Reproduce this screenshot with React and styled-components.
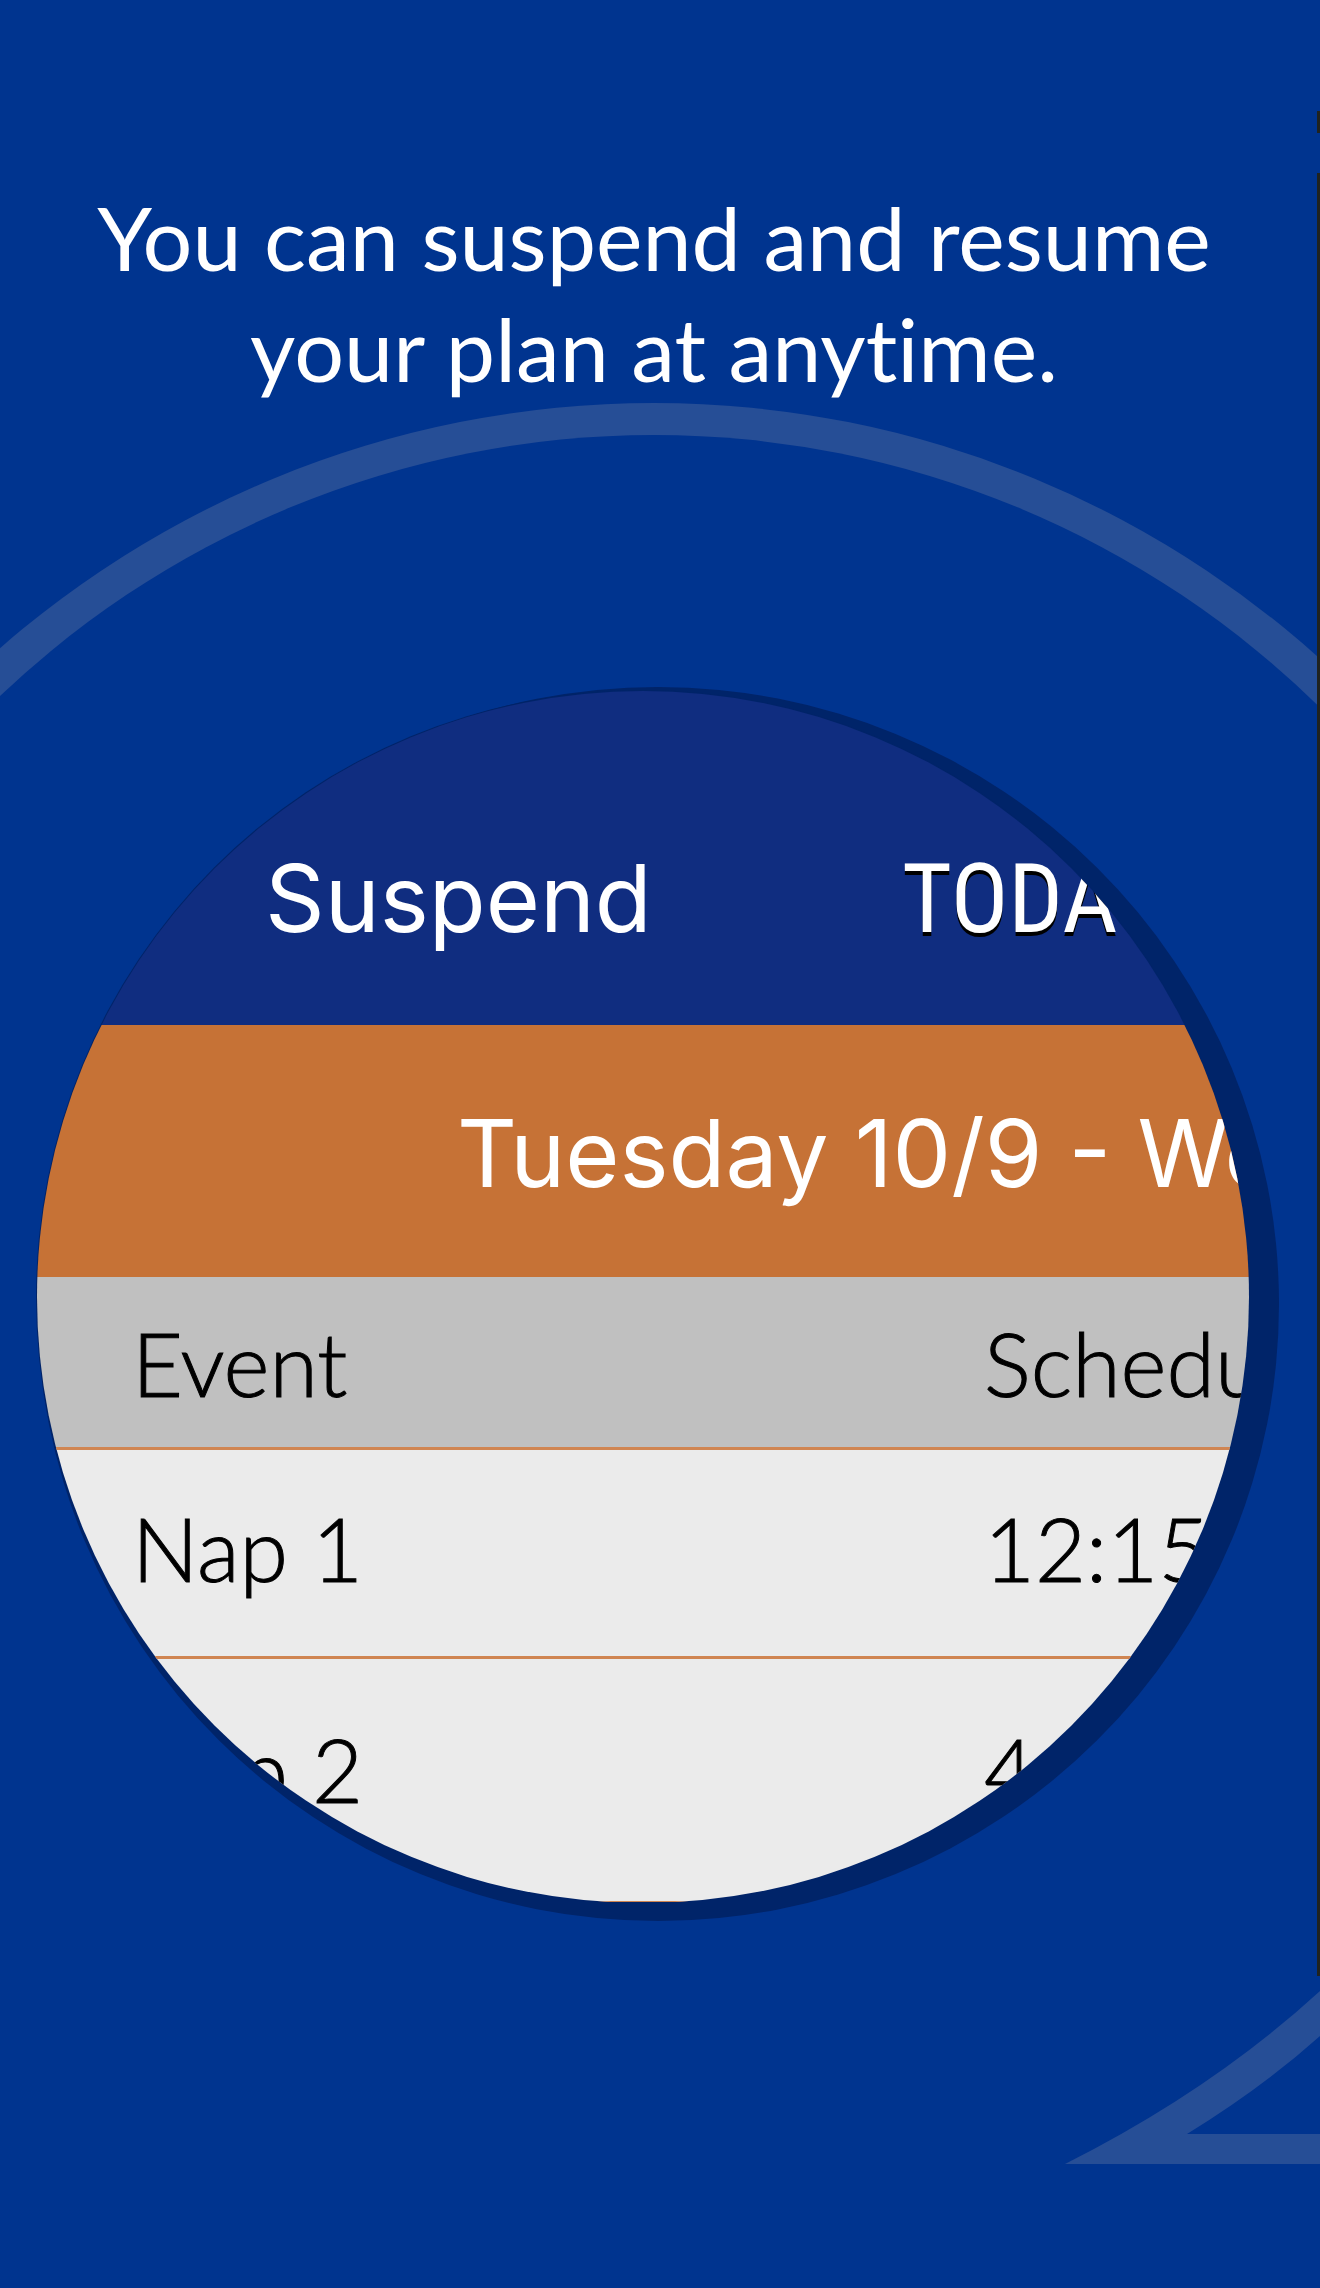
import React from "react";
import styled, { createGlobalStyle } from "styled-components";

const GlobalStyle = createGlobalStyle`
  *, *::before, *::after { box-sizing: border-box; }
  body { margin: 0; background: #00348f; }
`;

const Page = styled.main`
  position: relative;
  min-height: 2288px;
  padding: 182px 12px 0 0;
  overflow: hidden;
  background: #00348f;
  font-family: Lato, "Open Sans", sans-serif;
  font-variant-ligatures: none;
`;

const Backdrop = styled.svg`
  position: absolute;
  inset: 0;
  width: 100%;
  height: 2288px;
`;

const Headline = styled.h1`
  position: relative;
  margin: 0;
  color: #fff;
  font-size: 88px;
  font-weight: 400;
  line-height: 111px;
  text-align: center;
`;

const Stage = styled.section`
  position: relative;
  display: flex;
  justify-content: center;
  margin-top: 284px;
  padding: 3px 22px 0 0;
`;

const Lens = styled.div`
  width: 1212px;
  flex: none;
  height: 1212px;
  overflow: hidden;
  clip-path: circle(50%);
`;

const TopBar = styled.header`
  display: flex;
  align-items: baseline;
  height: 334px;
  padding: 149px 0 0 228px;
  background: #102d80;
`;

const SuspendButton = styled.button`
  width: 637px;
  padding: 0;
  border: 0;
  background: none;
  color: #fff;
  font: 400 93px/116px Inter, sans-serif;
  text-align: left;
`;

const Logo = styled.strong`
  color: #fff;
  font: 400 96px/116px "Roboto Condensed", "Liberation Sans Narrow", "Open Sans Condensed", "DejaVu Sans Condensed", sans-serif;
  text-shadow: 0 4px 0 #000;
`;

const DateBar = styled.h2`
  height: 252px;
  margin: 0;
  padding: 4px 0 0 420px;
  background: #c67236;
  color: #fff;
  font: 400 93px/248px Inter, sans-serif;
  white-space: nowrap;
`;

const Plan = styled.table`
  width: 100%;
  border-collapse: separate;
  border-spacing: 0;
  table-layout: fixed;
  color: #000;
  font-size: 88px;
  white-space: nowrap;
`;

const Cell = styled.td`
  width: ${(p) => (p.$first ? "947px" : "auto")};
  height: ${(p) => p.$height}px;
  padding: ${(p) => p.$top}px 0 0 ${(p) => (p.$first ? 95 : 0)}px;
  border-bottom: ${(p) => p.$rule || 3}px solid #d08552;
  background: ${(p) => (p.$head ? "#c0c0c0" : "#ebebeb")};
  font-weight: 300;
  -webkit-text-stroke: 1px #000;
  line-height: 100px;
  text-align: left;
  vertical-align: top;
`;

const rows = [
  { event: "Nap 1", time: "12:15", height: 209, top: 48, rule: 3 },
  { event: "Nap 2", time: "4:15", height: 243, top: 60, rule: 1 },
];

export default function App() {
  return (
    <Page>
      <GlobalStyle />
      <Backdrop viewBox="0 0 1320 2288" preserveAspectRatio="xMidYMin slice" aria-hidden="true">
        <circle cx="654" cy="1398" r="995" fill="#264e96" />
        <circle cx="654" cy="1385" r="950" fill="#00348f" />
        <rect x="0" y="1300" width="1320" height="1200" fill="#00348f" />
        <path d="M1320 1991Q1212 2090 1065 2164H1320V2134H1187Q1262 2088 1320 2036Z" fill="#264e96" />
        <path d="M1317 111H1320V133H1317ZM1317 173H1320V1976H1317Z" fill="#20231f" />
        <ellipse cx="658" cy="1304" rx="621" ry="617" fill="#002469" />
        <circle cx="643" cy="1297" r="607" fill="#002469" />
      </Backdrop>
      <Headline>
        You can suspend and resume
        <br />
        your plan at anytime.
      </Headline>
      <Stage>
        <Lens>
          <TopBar>
            <SuspendButton type="button">Suspend</SuspendButton>
            <Logo>TODAS</Logo>
          </TopBar>
          <DateBar>Tuesday 10/9 - Wednesday</DateBar>
          <Plan>
            <thead>
              <tr>
                <Cell as="th" scope="col" $first $head $height={173} $top={36}>Event</Cell>
                <Cell as="th" scope="col" $head $height={173} $top={36}>Schedule</Cell>
              </tr>
            </thead>
            <tbody>
              {rows.map((r) => (
                <tr key={r.event}>
                  <Cell $first $height={r.height} $top={r.top} $rule={r.rule}>{r.event}</Cell>
                  <Cell $height={r.height} $top={r.top} $rule={r.rule}>{r.time}</Cell>
                </tr>
              ))}
            </tbody>
          </Plan>
        </Lens>
      </Stage>
    </Page>
  );
}
